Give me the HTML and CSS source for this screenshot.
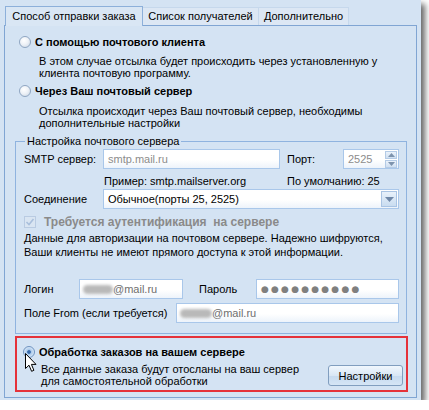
FILE: index.html
```html
<!DOCTYPE html>
<html>
<head>
<meta charset="utf-8">
<link rel="stylesheet" href="styles.css">
</head>
<body>
<div class="window">
  <div class="tabs">
    <div class="tab tab-active">Способ отправки заказа</div>
    <div class="tab tab-2">Список получателей</div>
    <div class="tab tab-3">Дополнительно</div>
  </div>
  <div class="pane">
    <div class="opt opt-first"><span class="radio"></span><span>С помощью почтового клиента</span></div>
    <div class="desc desc-first">В этом случае отсылка будет происходить через установленную у<br>клиента почтовую программу.</div>
    <div class="opt opt-second"><span class="radio"></span><span>Через Ваш почтовый сервер</span></div>
    <div class="desc desc-second">Отсылка происходит через Ваш почтовый сервер, необходимы<br>дополнительные настройки</div>

    <fieldset class="group">
      <legend class="group-title">Настройка почтового сервера</legend>

      <div class="row row-smtp">
        <span class="lbl lbl-wide">SMTP сервер:</span>
        <div class="input input-smtp"><span class="muted">smtp.mail.ru</span></div>
        <span class="lbl lbl-port">Порт:</span>
        <div class="input input-spin">
          <span class="muted">2525</span>
          <span class="spin-btns">
            <span class="spin-btn"><svg width="7" height="4" viewBox="0 0 7 4"><path d="M0 4 L3.5 0 L7 4 Z" fill="#7d93ad"/></svg></span>
            <span class="spin-btn"><svg width="7" height="4" viewBox="0 0 7 4"><path d="M0 0 L7 0 L3.5 4 Z" fill="#7d93ad"/></svg></span>
          </span>
        </div>
      </div>

      <div class="row-hint">
        <span class="hint-ex">Пример: smtp.mailserver.org</span>
        <span>По умолчанию: 25</span>
      </div>

      <div class="row row-conn">
        <span class="lbl lbl-wide">Соединение</span>
        <div class="input input-select">
          <span>Обычное(порты 25, 2525)</span>
          <span class="select-btn"><svg width="9" height="5" viewBox="0 0 9 5"><path d="M0 0 L9 0 L4.5 5 Z" fill="#6f88a8"/></svg></span>
        </div>
      </div>

      <div class="check-row">
        <span class="checkbox"><svg width="10" height="10" viewBox="0 0 10 10"><path d="M1.5 5 L4 7.5 L8.5 2" fill="none" stroke="#a9bfdc" stroke-width="1.6"/></svg></span>
        <span class="check-lbl">Требуется аутентификация&nbsp; на сервере</span>
      </div>

      <div class="auth-desc">Данные для авторизации на почтовом сервере. Надежно шифруются,<br>Ваши клиенты не имеют прямого доступа к этой информации.</div>

      <div class="row row-login">
        <span class="lbl lbl-login">Логин</span>
        <div class="input input-login"><span class="blob blob-login"></span><span class="mail">@mail.ru</span></div>
        <span class="lbl lbl-pass">Пароль</span>
        <div class="input input-pass"><span class="dots">●●●●●●●●●●</span></div>
      </div>

      <div class="row row-from">
        <span class="lbl lbl-from">Поле From (если требуется)</span>
        <div class="input input-from"><span class="blob blob-from"></span><span class="mail">@mail.ru</span></div>
      </div>
    </fieldset>

    <div class="redbox">
      <div class="opt opt-red"><span class="radio radio-hover"></span><span>Обработка заказов на вашем сервере</span></div>
      <div class="red-bottom">
        <div class="desc desc-red">Все данные заказа будут отосланы на ваш сервер<br>для самостоятельной обработки</div>
        <div class="btn">Настройки</div>
      </div>
    </div>
  </div>

  <svg class="cursor" width="13" height="20" viewBox="0 0 13 20">
    <path d="M0.5 0.5 L0.5 15.5 L4 12.2 L6.6 18.3 L8.9 17.3 L6.4 11.4 L11 11.4 Z" fill="#fff" stroke="#000" stroke-width="1" stroke-linejoin="miter"/>
  </svg>
</div>
</body>
</html>
```

FILE: styles.css
```css
* {
  box-sizing: border-box;
}

html, body {
  margin: 0;
  padding: 0;
  background: #ffffff;
}

body {
  font-family: "Liberation Sans", Arial, sans-serif;
  font-size: 11px;
  color: #000;
}

.window {
  position: relative;
  width: 421px;
  height: 400px;
  background: #d4e3f3;
  box-shadow: 4px 4px 6px rgba(0, 0, 0, 0.6);
  padding: 6px 4px 2px 4px;
  display: flex;
  flex-direction: column;
}

/* ---------- tabs ---------- */
.tabs {
  display: flex;
  align-items: flex-end;
  height: 19px;
  margin-left: 1px;
  position: relative;
  z-index: 1;
}

.tab {
  height: 18px;
  line-height: 17px;
  text-align: center;
  background: #dce7f4;
  border: 1px solid #c6d8ec;
  border-bottom: none;
  white-space: nowrap;
}

.tab-active {
  width: 138px;
  height: 20px;
  line-height: 18px;
  margin-bottom: -1px;
  background: #d9e6f4;
  border-color: #8db0da;
}

.tab-2 {
  width: 116px;
  border-left: none;
}

.tab-3 {
  width: 90px;
  border-left: none;
}

/* ---------- pane ---------- */
.pane {
  flex: 1;
  border: 1px solid #80a5d3;
  padding: 0 9px 0 10px;
}

.opt {
  display: flex;
  align-items: center;
  height: 14px;
  padding-left: 4px;
  font-weight: bold;
  white-space: nowrap;
}

.opt-first {
  margin-top: 9px;
}

.opt-second {
  margin-top: 5px;
}

.radio {
  width: 12px;
  height: 12px;
  margin-right: 4px;
  border-radius: 50%;
  border: 1px solid #8fa6c2;
  background: radial-gradient(circle at 40% 35%, #ffffff 0%, #eef2f7 45%, #c8d4e2 100%);
  flex: none;
}

.radio-hover {
  border-color: #6f93c0;
  background: radial-gradient(circle at 50% 50%, #2f5f9e 0%, #4a7bb8 22%, #a9c8ea 32%, #d5e6f7 70%, #a8c3e2 100%);
}

.desc {
  padding-left: 24px;
  line-height: 12px;
  white-space: nowrap;
}

.desc-first {
  margin-top: 6px;
}

.desc-second {
  margin-top: 7px;
}

/* ---------- group box ---------- */
.group {
  margin: 5px 0 0 0;
  padding: 0 7px 10px 8px;
  border: 1px solid #8fb3df;
  min-width: 0;
}

.group-title {
  margin-left: 1px;
  padding: 0 2px;
  line-height: 14px;
}

.row {
  display: flex;
  align-items: center;
  height: 20px;
  white-space: nowrap;
}

.row-smtp {
  margin-top: 1px;
}

.lbl {
  flex: none;
}

.lbl-wide {
  width: 79px;
}

.lbl-port {
  width: 56px;
  margin-left: 7px;
}

.input {
  height: 20px;
  border: 1px solid #a9c7ea;
  background: linear-gradient(#ffffff 55%, #edf3fb);
  display: flex;
  align-items: center;
  padding-left: 4px;
  white-space: nowrap;
  overflow: hidden;
  flex: none;
}

.muted {
  color: #8c8c8c;
}

.input-smtp {
  width: 177px;
}

.input-spin {
  width: 56px;
  padding-right: 1px;
  justify-content: space-between;
}

.spin-btns {
  display: flex;
  flex-direction: column;
  gap: 1px;
  width: 12px;
}

.spin-btn {
  height: 8px;
  display: flex;
  align-items: center;
  justify-content: center;
  background: linear-gradient(#eaf2fb, #cfdff1);
  border: 1px solid #b4cbe6;
}

.row-hint {
  display: flex;
  margin-top: 5px;
  line-height: 14px;
  white-space: nowrap;
}

.hint-ex {
  margin-left: 80px;
  width: 183px;
}

.row-conn {
  margin-top: 1px;
}

.input-select {
  width: 296px;
  justify-content: space-between;
  padding-right: 1px;
}

.select-btn {
  width: 16px;
  height: 16px;
  display: flex;
  align-items: center;
  justify-content: center;
  background: linear-gradient(#e8f1fb, #c9dcf0);
  border: 1px solid #a9c4e4;
}

.check-row {
  display: flex;
  align-items: center;
  height: 14px;
  margin-top: 6px;
}

.checkbox {
  width: 12px;
  height: 12px;
  margin-right: 8px;
  border: 1px solid #b9cbe2;
  background: #d9e5f2;
  display: flex;
  align-items: center;
  justify-content: center;
}

.check-lbl {
  font-size: 12px;
  font-weight: bold;
  color: #8a8a8a;
  white-space: nowrap;
}

.auth-desc {
  margin-top: 2px;
  line-height: 14px;
  white-space: nowrap;
}

.row-login {
  margin-top: 20px;
}

.lbl-login {
  width: 55px;
}

.input-login {
  width: 104px;
}

.lbl-pass {
  width: 57px;
  margin-left: 16px;
}

.input-pass {
  width: 143px;
}

.dots {
  font-family: "DejaVu Sans", sans-serif;
  font-size: 9px;
  letter-spacing: 2.2px;
  color: #7f7f7f;
}

.blob {
  display: inline-block;
  height: 9px;
  background: #b9b9b9;
  border-radius: 5px;
  filter: blur(1.5px);
  flex: none;
}

.blob-login {
  width: 30px;
  margin-left: -1px;
}

.blob-from {
  width: 32px;
  margin-left: -1px;
}

.mail {
  color: #6e6e6e;
}

.row-from {
  margin-top: 4px;
}

.lbl-from {
  width: 152px;
}

.input-from {
  width: 223px;
}

/* ---------- highlighted option ---------- */
.redbox {
  margin-top: 2px;
  margin-right: -1px;
  border: 2px solid #e5323a;
  padding: 7px 3px 3px 2px;
}

.red-bottom {
  display: flex;
  justify-content: space-between;
  align-items: flex-end;
  margin-top: 4px;
}

.desc-red {
  padding-left: 22px;
}

.btn {
  width: 75px;
  height: 21px;
  margin-bottom: 1px;
  border: 1px solid #819ebf;
  border-radius: 3px;
  background: linear-gradient(#f1f7fd, #d9e7f5 50%, #c6daef 51%, #d5e5f5);
  display: flex;
  align-items: center;
  justify-content: center;
}

.cursor {
  position: absolute;
  left: 25px;
  top: 353px;
}
```
